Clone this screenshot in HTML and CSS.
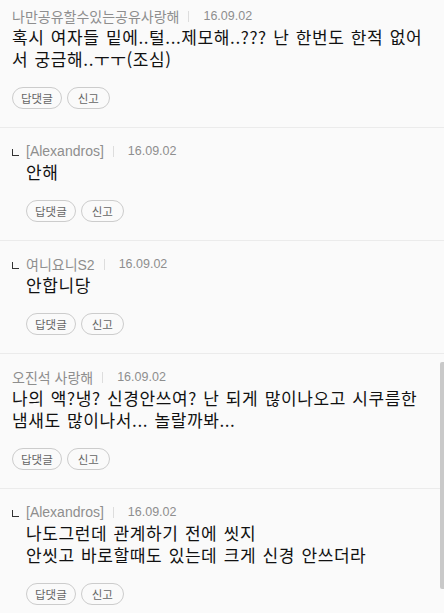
FILE: index.html
```html
<!DOCTYPE html>
<html lang="ko">
<head>
  <meta charset="UTF-8">
  <meta name="viewport" content="width=device-width, initial-scale=1.0">
  <title>댓글</title>
  <link rel="stylesheet" href="styles.css">
</head>
<body>

  <ul class="comments">
    <li class="comment">
      <div class="meta">
        <span class="name">나만공유할수있는공유사랑해</span><span class="bar"></span><span class="date">16.09.02</span>
      </div>
      <p class="body">혹시 여자들 밑에..털...제모해..??? 난 한번도 한적 없어서 궁금해..ㅜㅜ(조심)</p>
      <div class="actions">
        <button class="btn">답댓글</button>
        <button class="btn">신고</button>
      </div>
    </li>

    <li class="comment reply">
      <div class="meta">
        <span class="mark"></span><span class="name">[Alexandros]</span><span class="bar"></span><span class="date">16.09.02</span>
      </div>
      <p class="body">안해</p>
      <div class="actions">
        <button class="btn">답댓글</button>
        <button class="btn">신고</button>
      </div>
    </li>

    <li class="comment reply">
      <div class="meta">
        <span class="mark"></span><span class="name">여니요니S2</span><span class="bar"></span><span class="date">16.09.02</span>
      </div>
      <p class="body">안합니당</p>
      <div class="actions">
        <button class="btn">답댓글</button>
        <button class="btn">신고</button>
      </div>
    </li>

    <li class="comment">
      <div class="meta">
        <span class="name">오진석 사랑해</span><span class="bar"></span><span class="date">16.09.02</span>
      </div>
      <p class="body">나의 액?냉? 신경안쓰여? 난 되게 많이나오고 시쿠름한 냄새도 많이나서... 놀랄까봐...</p>
      <div class="actions">
        <button class="btn">답댓글</button>
        <button class="btn">신고</button>
      </div>
    </li>

    <li class="comment reply">
      <div class="meta">
        <span class="mark"></span><span class="name">[Alexandros]</span><span class="bar"></span><span class="date">16.09.02</span>
      </div>
      <p class="body">나도그런데 관계하기 전에 씻지<br>안씻고 바로할때도 있는데 크게 신경 안쓰더라</p>
      <div class="actions">
        <button class="btn">답댓글</button>
        <button class="btn">신고</button>
      </div>
    </li>
  </ul>

  <!-- overlay scrollbar thumb -->
  <div class="scroll-thumb"></div>

</body>
</html>
```

FILE: styles.css
```css
html, body {
  overflow: hidden;
}
body {
  font-family: "Noto Sans CJK KR", "Noto Sans", sans-serif;
  background: #fafafa;
  margin: 0;
  color: #111;
}
.comments {
  list-style: none;
  margin: -7px 0 0;
  padding: 0;
}
.comment {
  padding: 15px 12px 18px;
  border-bottom: 1px solid #ebebeb;
}
.meta {
  display: flex;
  align-items: center;
  height: 16px;
  font-family: "Liberation Sans", "Noto Sans CJK KR", sans-serif;
  font-size: 14px;
  color: #8e8e8e;
}
.date {
  font-size: 12.5px;
}
.bar {
  display: inline-block;
  width: 1px;
  height: 11px;
  background: #ddd;
  margin: 0 14px 0 9px;
}
.mark {
  display: inline-block;
  width: 6px;
  height: 6px;
  border-left: 1px solid #333;
  border-bottom: 1px solid #333;
  margin: 3px 7px 0 0;
}
.body {
  margin: 2px 0 0;
  font-size: 17px;
  line-height: 22px;
  letter-spacing: 0.6px;
  word-spacing: 1px;
}
.actions {
  display: flex;
  gap: 5px;
  margin-top: 17px;
}
.btn {
  height: 22px;
  min-width: 43px;
  padding: 0 8px;
  font-family: inherit;
  font-size: 11.5px;
  line-height: 20px;
  color: #666;
  background: transparent;
  border: 1px solid #ccc;
  border-radius: 11px;
  cursor: pointer;
}
.reply .body,
.reply .actions {
  margin-left: 14px;
}
.scroll-thumb {
  position: fixed;
  top: 362px;
  right: 0;
  width: 4px;
  height: 227px;
  background: #c9c9c9;
  border-radius: 2px 0 0 2px;
}
```
